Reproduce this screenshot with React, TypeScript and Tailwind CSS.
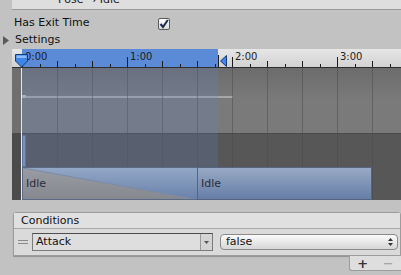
import React from 'react'

const font = { fontFamily: '"DejaVu Sans", "Liberation Sans", sans-serif' }

// one tick every 17.5px, a second every 6 ticks
const ticks = Array.from({ length: 23 }, (_, i) => i)
const gridLines = [57, 92, 127, 162, 197, 232, 267, 302, 337, 372]
const labels = [
  { x: 22, text: '0:00' },
  { x: 127, text: '1:00' },
  { x: 232, text: '2:00' },
  { x: 337, text: '3:00' },
]

function Ruler() {
  return (
    <div className="relative h-[19px] ml-[12px] bg-gradient-to-b from-[#e6e6e6] to-[#d2d2d2] border-b border-[#2e2e2e] overflow-hidden">
      <div className="absolute left-[10px] top-0 bottom-0 w-[196px] bg-[#5b8bd6]" />
      {ticks.map((i) => {
        const h = i % 6 === 0 ? 10 : i % 2 === 0 ? 6 : 3
        return (
          <div
            key={i}
            className="absolute bottom-0 w-px bg-[#1c1c1c]"
            style={{ left: 10 + Math.round(i * 17.5), height: h }}
          />
        )
      })}
      {labels.map((l) => (
        <span
          key={l.text}
          className="absolute top-[2px] text-[10px] leading-[12px] text-[#1e1e1e]"
          style={{ left: l.x - 12 + 3 }}
        >
          {l.text}
        </span>
      ))}
      {/* start marker */}
      <svg className="absolute left-[2px] top-[4px]" width="15" height="15" viewBox="0 0 15 15">
        <path d="M1.5 1.5 H13.5 V8 L7.5 14 L1.5 8 Z" fill="#3f86ea" stroke="#143a78" />
        <path d="M2.5 2.5 H12.5 V5 H2.5 Z" fill="#8dbcf6" />
      </svg>
      {/* end marker */}
      <div className="absolute left-[206px] top-[6px] w-px h-[12px] bg-[#1c1c1c]" />
      <svg className="absolute left-[208px] top-[6px]" width="7" height="12" viewBox="0 0 7 12">
        <path d="M6.5 0.5 V11.5 L0.5 6 Z" fill="#3f86ea" stroke="#143a78" />
      </svg>
    </div>
  )
}

function IdleBar({ fade }: { fade?: boolean }) {
  return (
    <div
      className={
        'relative h-[33px] border overflow-hidden ' +
        (fade
          ? 'w-[176px] border-[#5a6a86] bg-gradient-to-b from-[#93a7c6] to-[#6a82ab]'
          : '-ml-px w-[175px] border-[#56657f] bg-gradient-to-b from-[#97a9c4] to-[#667ea6]')
      }
    >
      {fade && (
        <svg className="absolute inset-0" width="176" height="33" viewBox="0 0 176 33" preserveAspectRatio="none">
          <defs>
            <linearGradient id="g1" x1="0" y1="0" x2="0" y2="1">
              <stop offset="0" stopColor="#9a9ca4" />
              <stop offset="1" stopColor="#85878f" />
            </linearGradient>
          </defs>
          <path d="M0 0 L176 32 L176 33 L0 33 Z" fill="url(#g1)" />
          <path d="M0 0 L176 32" stroke="#7c8aa2" strokeWidth="1" fill="none" />
        </svg>
      )}
      <span className="relative block pl-[3px] pt-[9px] text-[11px] leading-[13px] text-[#2a2e38]">Idle</span>
    </div>
  )
}

function Timeline() {
  return (
    <div className="relative flex h-[132px] ml-[12px] overflow-hidden">
      <div className="flex flex-col w-[9px]">
        <div className="h-[65px] bg-[#6f6f6f]" />
        <div className="flex-1 bg-[#4b4b4b]" />
      </div>
      <div className="w-px bg-[#e8e8e8] z-20" />
      <div className="flex-1 flex flex-col">
        <div className="h-[65px] pt-[27px] bg-gradient-to-b from-[#6c6c6c] via-[#7a7a7a] to-[#7a7a7a]">
          <div className="flex items-center">
            <div className="w-[4px] h-[3px] bg-[#b8b8b8]" />
            <div className="w-[207px] h-[2px] bg-[#a6a6a6]" />
          </div>
        </div>
        <div className="flex-1 flex flex-col bg-[#575757] border-t border-[#4a4a4a]">
          <div className="h-[33px] pt-[1px]">
            <div className="w-[4px] h-full bg-[#7f95b8] border border-[#5d6f8e]" />
          </div>
          <div className="relative z-10 flex">
            <IdleBar fade />
            <IdleBar />
          </div>
        </div>
      </div>
      {gridLines.map((x) => (
        <div key={x} className="absolute top-0 bottom-0 w-px bg-[#4a4a4a]/50" style={{ left: x - 12 }} />
      ))}
      {/* transition overlay */}
      <div className="absolute left-[10px] top-0 bottom-0 w-[196px] bg-[#5f86d0]/20" />
    </div>
  )
}

export default function App() {
  return (
    <div className="w-[401px] h-[275px] bg-[#c2c2c2] overflow-hidden text-[#111]" style={font}>
      {/* previous panel */}
      <div className="ml-[12px] h-[10px] bg-[#dedede] border-b border-[#9a9a9a] overflow-hidden">
        <div className="mt-[-7px] pl-[46px] text-[11px] leading-[13px] text-[#222]">Pose → Idle</div>
      </div>

      <div className="flex items-center h-[17px] mt-[5px] pl-[14px] text-[11px]">
        <span className="w-[144px]">Has Exit Time</span>
        <div className="w-[12px] h-[12px] bg-gradient-to-b from-[#fdfdfd] to-[#dcdcdc] border border-[#5a5a5a] rounded-[2px] flex items-center justify-center">
          <svg width="10" height="10" viewBox="0 0 10 10">
            <path d="M1.5 5 L4 8 L8.8 1" stroke="#1a2a50" strokeWidth="2" fill="none" />
          </svg>
        </div>
      </div>

      <div className="flex items-center h-[17px] text-[11px]">
        <svg className="ml-[3px] mr-[6px]" width="6" height="9" viewBox="0 0 6 9">
          <path d="M0 0 L6 4.5 L0 9 Z" fill="#5a5a5a" />
        </svg>
        <span>Settings</span>
      </div>

      <div>
        <Ruler />
        <Timeline />
      </div>

      {/* Conditions */}
      <div className="ml-[13px] mt-[12px] border border-[#9c9c9c] rounded-t-[3px] bg-[#dedede] shadow-[0_1px_1px_rgba(0,0,0,0.25)]">
        <div className="h-[16px] pl-[7px] text-[11px] leading-[16px] border-b border-[#a8a8a8] bg-[#e0e0e0]">Conditions</div>
        <div className="flex items-center h-[26px] bg-[#dadada]">
          <div className="ml-[4px] w-[10px] flex flex-col gap-[2px]">
            <div className="h-px bg-[#8a8a8a]" />
            <div className="h-px bg-[#8a8a8a]" />
          </div>
          <div className="ml-[4px] w-[181px] h-[18px] flex border border-[#7a7a7a] border-t-[#4e4e4e] bg-[#dedede]">
            <span className="flex-1 pl-[3px] text-[11px] leading-[16px]">Attack</span>
            <div className="w-[12px] border-l border-[#9a9a9a] bg-[#d4d4d4] flex items-center justify-center">
              <svg width="5" height="3" viewBox="0 0 5 3">
                <path d="M0 0 H5 L2.5 3 Z" fill="#555" />
              </svg>
            </div>
          </div>
          <div className="ml-[7px] w-[178px] h-[16px] flex items-center rounded-[4px] border border-[#8a8a8a] bg-gradient-to-b from-[#fbfbfb] to-[#d6d6d6]">
            <span className="flex-1 pl-[5px] text-[11px] leading-[14px]">false</span>
            <svg className="mr-[4px]" width="5" height="8" viewBox="0 0 5 8">
              <path d="M0 3 L2.5 0 L5 3 Z M0 5 L2.5 8 L5 5 Z" fill="#333" />
            </svg>
          </div>
        </div>
      </div>
      <div className="flex justify-end">
        <div className="w-[52px] h-[15px] flex items-center justify-around bg-[#dedede] border-l border-b border-[#9c9c9c] rounded-bl-[3px] text-[13px] leading-[13px]">
          <span className="font-bold text-[#333]">+</span>
          <span className="text-[#999]">−</span>
        </div>
      </div>
    </div>
  )
}
